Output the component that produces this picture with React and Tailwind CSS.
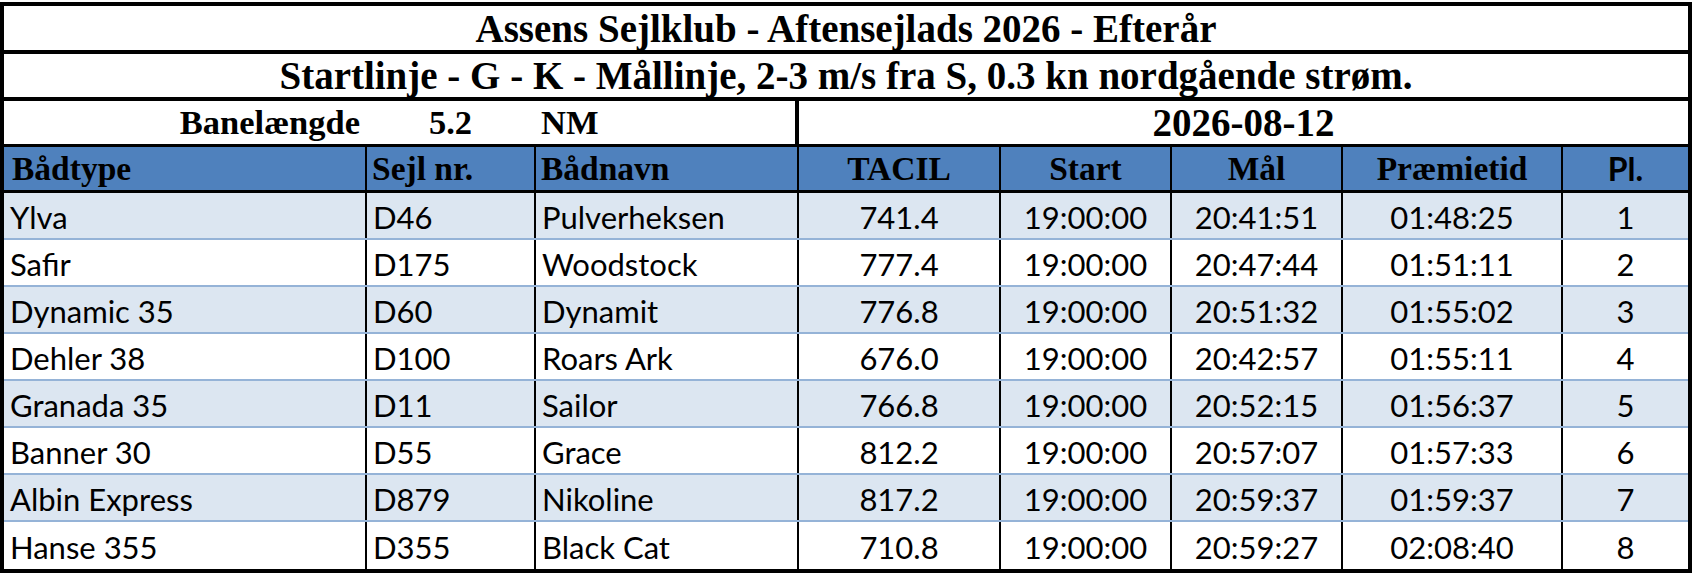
import React from 'react';

const rows = [
  ['Ylva', 'D46', 'Pulverheksen', '741.4', '19:00:00', '20:41:51', '01:48:25', '1'],
  ['Safir', 'D175', 'Woodstock', '777.4', '19:00:00', '20:47:44', '01:51:11', '2'],
  ['Dynamic 35', 'D60', 'Dynamit', '776.8', '19:00:00', '20:51:32', '01:55:02', '3'],
  ['Dehler 38', 'D100', 'Roars Ark', '676.0', '19:00:00', '20:42:57', '01:55:11', '4'],
  ['Granada 35', 'D11', 'Sailor', '766.8', '19:00:00', '20:52:15', '01:56:37', '5'],
  ['Banner 30', 'D55', 'Grace', '812.2', '19:00:00', '20:57:07', '01:57:33', '6'],
  ['Albin Express', 'D879', 'Nikoline', '817.2', '19:00:00', '20:59:37', '01:59:37', '7'],
  ['Hanse 355', 'D355', 'Black Cat', '710.8', '19:00:00', '20:59:27', '02:08:40', '8'],
];

const grid = 'grid grid-cols-[363px_169px_263px_202px_171px_171px_220px_125px]';
const serif = "font-['Liberation_Serif',serif] font-bold";
const sans = "font-['Lato',sans-serif]";

const App = () => {
  return (
    <div className="w-[1696px] h-[576px] bg-white pt-[2px]">
      <div className="w-[1692px] border-4 border-black text-black">
        {/* title rows */}
        <div className={`h-[48px] border-b-4 border-black flex items-center justify-center text-[39px] leading-none ${serif}`}>
          Assens Sejlklub - Aftensejlads 2026 - Efterår
        </div>
        <div className={`h-[47px] border-b-4 border-black flex items-center justify-center text-[39px] leading-none ${serif}`}>
          Startlinje - G - K - Mållinje, 2-3 m/s fra S, 0.3 kn nordgående strøm.
        </div>

        {/* course length + date */}
        <div className={`${grid} h-[46px] border-b-[3px] border-black leading-none ${serif}`}>
          <div className="flex items-center justify-end pr-[7px] text-[34.5px]">Banelængde</div>
          <div className="flex items-center justify-center text-[34.5px] pr-[2px]">5.2</div>
          <div className="flex items-center pl-[5px] text-[34.5px] border-r-4 border-black">NM</div>
          <div className="col-span-5 flex items-center justify-center text-[39px]">2026-08-12</div>
        </div>

        {/* header */}
        <div className={`${grid} h-[46px] border-b-[3px] border-black bg-[#4f81bd] leading-none text-[33.5px]`}>
          <div className={`flex items-center pl-[8px] border-r-2 border-black ${serif}`}>Bådtype</div>
          <div className={`flex items-center pl-[5px] border-r-2 border-black ${serif}`}>Sejl nr.</div>
          <div className={`flex items-center pl-[5px] border-r-2 border-black ${serif}`}>Bådnavn</div>
          <div className={`flex items-center justify-center border-r-2 border-black ${serif}`}>TACIL</div>
          <div className={`flex items-center justify-center border-r-2 border-black ${serif}`}>Start</div>
          <div className={`flex items-center justify-center border-r-2 border-black ${serif}`}>Mål</div>
          <div className={`flex items-center justify-center border-r-2 border-black ${serif}`}>Præmietid</div>
          <div className={`flex items-center justify-center font-bold text-[32px] ${sans}`}>Pl.</div>
        </div>

        {/* results */}
        {rows.map((r, i) => (
          <div
            key={r[1]}
            className={`${grid} h-[47px] leading-none text-[31px] ${sans} ${i % 2 === 0 ? 'bg-[#dce6f1]' : 'bg-white'} ${i < rows.length - 1 ? 'border-b-2 border-[#95b3d7]' : ''}`}
          >
            {r.map((v, j) => (
              <div
                key={j}
                className={`flex items-center pt-[3px] ${j < 3 ? 'pl-[6px]' : 'justify-center'} ${j < 7 ? 'border-r-2 border-black' : ''}`}
              >
                {v}
              </div>
            ))}
          </div>
        ))}
      </div>
    </div>
  );
};

export default App;
